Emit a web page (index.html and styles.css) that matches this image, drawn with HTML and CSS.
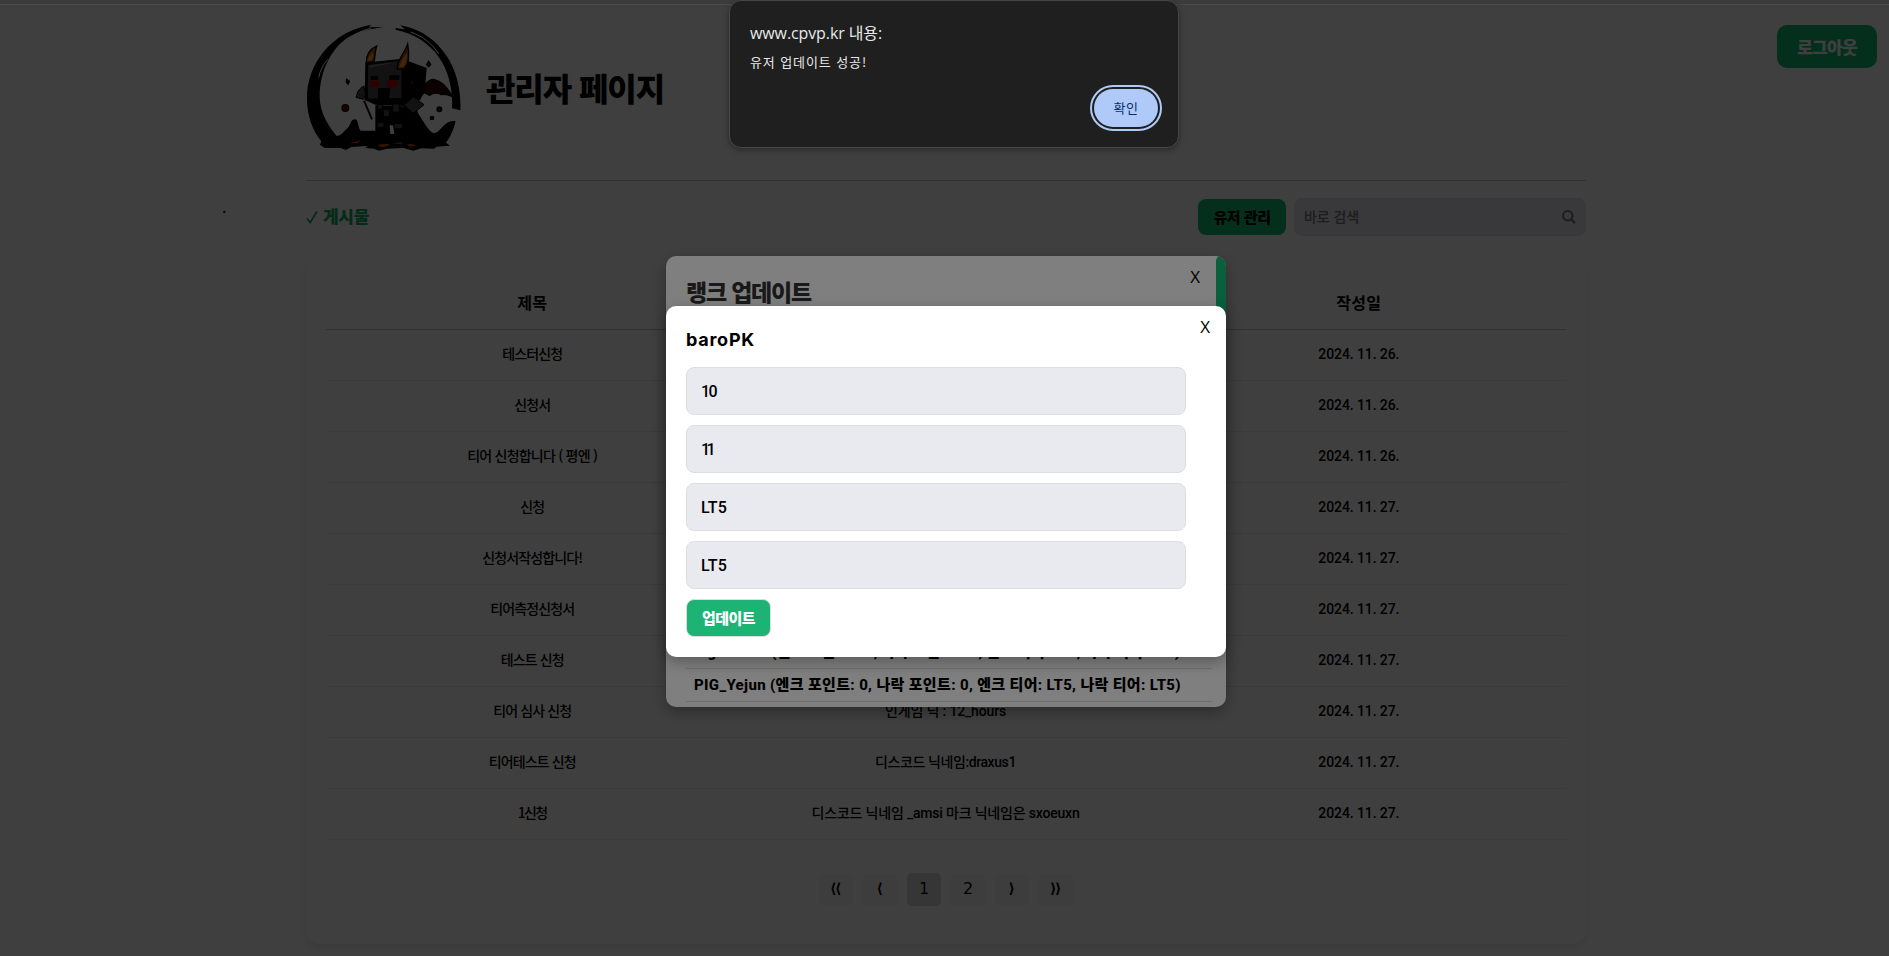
FILE: index.html
```html
<!DOCTYPE html>
<html lang="ko">
<head>
<meta charset="utf-8">
<title>관리자 페이지</title>
<link rel="stylesheet" href="styles.css">
</head>
<body>
<div class="topstrip"></div>
<span class="dot">.</span>
<button class="logout"><span data-w="60">로그아웃</span></button>
<main class="page">
  <header class="header">
    <svg class="logo" viewBox="48 60 468 402">
      <path d="M244 74C130 92 48 188 51 300C52 350 68 392 94 424L90 434L104 444L152 444L168 450L184 441L232 438L226 444L252 446L268 452L290 446L340 444L370 452L394 445L432 446L440 440L480 437L468 428C482 410 490 390 497 364C486 360 474 366 464 374C452 384 446 398 430 400C414 392 402 366 384 340L378 320L256 316L256 392L212 392C204 382 206 370 200 359C194 356 188 357 184 364C180 376 174 386 162 394C156 404 150 406 140 408C116 380 90 340 89 292C88 210 130 130 190 104C214 92 248 86 278 82C262 80 248 82 236 82Z"/>
      <path d="M330 76C430 91 518 186 511 331L486 325C492 215 440 115 316 89L318 84C328 86 336 86 345 88Z"/>
      <path class="gleam" d="M180 112c18-12 40-22 62-27M86 232c4-20 14-40 27-54M362 96c38 14 64 34 84 66"/>
      <path class="wing" d="M396 276C402 256 412 240 428 238C456 242 472 264 488 290C474 284 464 280 454 284C440 276 430 278 418 286C410 280 404 278 396 276Z"/>
      <path d="M226 188L336 176L410 204L404 276L390 300L344 318L256 314L224 300Z"/>
      <path class="face" d="M234 194L334 182L334 294L234 296Z"/>
      <path class="gray" d="M238 198L320 185L290 192L240 202Z"/>
      <path class="horn" d="M229 188C228 166 238 148 260 138C254 156 256 170 252 186ZM322 208C318 184 342 164 353 132C358 160 358 190 344 206Z"/>
      <path class="flame" d="M232 182C236 168 244 164 250 156C248 168 250 174 246 180ZM328 200C332 184 342 174 350 158C352 178 350 192 338 200Z"/>
      <path d="M242 228H264V240H242ZM298 226H328V240H298ZM264 264H300V276L296 296H264Z"/>
      <path class="eye" d="M241 242H267V262H241ZM292 240H322V262H292Z"/>
      <path class="plate" d="M342 316L370 290L402 314L370 340ZM262 314H278V326H262ZM280 328H298V350H280ZM308 312H328V336H308ZM262 368H282V382H262ZM312 370H338V386H312Z"/>
      <path class="plate" d="M198 292C202 276 208 264 222 258L226 284L220 298Z"/>
      <path class="spear" d="M222 302L246 358"/>
      <path class="gap" d="M299 376L309 376L313 402L301 402Z"/>
      <g class="spark"><circle cx="166" cy="324" r="10"/><circle cx="448" cy="328" r="7"/><circle cx="426" cy="354" r="5"/><path d="M416 184L422 194L416 200L410 194ZM170 238L178 244L174 252L169 247Z"/></g>
      <circle class="eye" cx="366" cy="248" r="4"/>
      <path class="lava" d="M180 430L212 421L204 430ZM262 436C276 430 288 430 302 434L286 440C278 442 270 440 262 436ZM306 430L340 427L332 432ZM350 434C360 430 370 432 380 436L364 441Z"/>
    </svg>
    <h1 class="title"><span data-w="178">관리자 페이지</span></h1>
  </header>
  <div class="toolbar">
    <div class="tab">
      <svg viewBox="0 0 12 14"><path d="M1 8.5l3.2 4L11 1.5"/></svg>
      <span data-w="46">게시물</span>
    </div>
    <div class="tools">
      <button class="manage"><span data-w="57">유저 관리</span></button>
      <div class="search">
        <span data-w="55">바로 검색</span>
        <svg viewBox="0 0 14 14"><circle cx="5.8" cy="5.8" r="4.7"/><path d="M9 9l4 4.2"/></svg>
      </div>
    </div>
  </div>
  <section class="card">
    <div class="row head"><span class="cell"><b data-w="30">제목</b></span><span class="cell"><b>내용</b></span><span class="cell"><b data-w="45">작성일</b></span></div>
    <div class="row"><span class="cell"><i data-w="60">테스터신청</i></span><span class="cell"></span><span class="cell"><i class="lat" data-w="81">2024. 11. 26.</i></span></div>
    <div class="row"><span class="cell"><i data-w="36">신청서</i></span><span class="cell"></span><span class="cell"><i class="lat" data-w="81">2024. 11. 26.</i></span></div>
    <div class="row"><span class="cell"><i data-w="130">티어 신청합니다 ( 평엔 )</i></span><span class="cell"></span><span class="cell"><i class="lat" data-w="81">2024. 11. 26.</i></span></div>
    <div class="row"><span class="cell"><i data-w="24">신청</i></span><span class="cell"></span><span class="cell"><i class="lat" data-w="81">2024. 11. 27.</i></span></div>
    <div class="row"><span class="cell"><i data-w="100">신청서작성합니다!</i></span><span class="cell"></span><span class="cell"><i class="lat" data-w="81">2024. 11. 27.</i></span></div>
    <div class="row"><span class="cell"><i data-w="84">티어측정신청서</i></span><span class="cell"></span><span class="cell"><i class="lat" data-w="81">2024. 11. 27.</i></span></div>
    <div class="row"><span class="cell"><i data-w="63">테스트 신청</i></span><span class="cell"></span><span class="cell"><i class="lat" data-w="81">2024. 11. 27.</i></span></div>
    <div class="row"><span class="cell"><i data-w="78">티어 심사 신청</i></span><span class="cell"><i class="lat" data-w="121">인게임 닉 : 12_hours</i></span><span class="cell"><i class="lat" data-w="81">2024. 11. 27.</i></span></div>
    <div class="row"><span class="cell"><i data-w="87">티어테스트 신청</i></span><span class="cell"><i class="lat" data-w="141">디스코드 닉네임:draxus1</i></span><span class="cell"><i class="lat" data-w="81">2024. 11. 27.</i></span></div>
    <div class="row"><span class="cell"><i data-w="29">1신청</i></span><span class="cell"><i class="lat" data-w="268">디스코드 닉네임 _amsi 마크 닉네임은 sxoeuxn</i></span><span class="cell"><i class="lat" data-w="81">2024. 11. 27.</i></span></div>
    <nav class="pager">
      <span class="pg arrow"><u>⟨</u><u>⟨</u></span><span class="pg arrow"><u>⟨</u></span><span class="pg on">1</span><span class="pg">2</span><span class="pg arrow"><u>⟩</u></span><span class="pg arrow"><u>⟩</u><u>⟩</u></span>
    </nav>
  </section>
</main>

<div class="overlay"></div>
<div class="modal list">
  <span class="close">X</span>
  <h2><span data-w="125">랭크 업데이트</span></h2>
  <div class="users">
    <div class="user"><span class="lat" data-w="486">Pignumber (엔크 포인트: 10, 나락 포인트: 10, 엔크 티어: LT5, 나락 티어: LT5)</span></div>
    <div class="user"><span class="lat" data-w="487">PIG_Yejun (엔크 포인트: 0, 나락 포인트: 0, 엔크 티어: LT5, 나락 티어: LT5)</span></div>
  </div>
  <div class="thumb"></div>
</div>
<div class="overlay"></div>
<div class="modal edit">
  <span class="close">X</span>
  <h3><span data-w="69">baroPK</span></h3>
  <div class="field"><span data-w="15">10</span></div>
  <div class="field"><span data-w="11">11</span></div>
  <div class="field"><span data-w="26">LT5</span></div>
  <div class="field"><span data-w="26">LT5</span></div>
  <button class="update"><span data-w="53">업데이트</span></button>
</div>
<div class="alert">
  <div class="site"><span data-w="132">www.cpvp.kr 내용:</span></div>
  <div class="msg"><span data-w="117">유저 업데이트 성공!</span></div>
  <button class="ok"><span data-w="25">확인</span></button>
</div>
<script src="fit.js"></script>
</body>
</html>
```
FILE: styles.css
```css
* { box-sizing: border-box; }
html, body { margin: 0; height: 956px; overflow: hidden; }
body {
  position: relative;
  background: #fff;
  color: #000;
  font-family: "Noto Sans CJK KR", sans-serif;
}
button { font: inherit; border: 0; padding: 0; }
span, b, i { white-space: nowrap; font-style: normal; }
.lat { font-family: "Roboto", "Noto Sans CJK KR", sans-serif; }

.topstrip {
  position: absolute; left: 0; right: 0; top: 0; z-index: 2;
  height: 5px; background: #3c3c3c; border-bottom: 1px solid #4a4a4a;
}
.dot { position: absolute; left: 222px; top: 195px; font-size: 16px; line-height: 22px; }
.logout {
  position: absolute; left: 1777px; top: 25px;
  width: 100px; height: 43px; border-radius: 10px;
  background: #12bf77; color: #fff; font-size: 17px; font-weight: 900; line-height: 38px;
}

.page { width: 1280px; margin-left: 306px; }
.header {
  display: flex; align-items: flex-start;
  height: 181px; padding-top: 20px;
  border-bottom: 1px solid #c4c4c4;
}
.logo { width: 156px; height: 134px; }
.title { margin: 43px 0 0 24px; font-size: 32px; line-height: 48px; font-weight: 900; }
.gleam { fill: none; stroke: #fff; stroke-width: 3; }
.wing { fill: #300; stroke: #000; stroke-width: 4; }
.face { fill: #484848; }
.gray { fill: #999; }
.horn { fill: #b45010; stroke: #000; stroke-width: 4; }
.flame { fill: #ff9a30; }
.eye { fill: #b00; }
.plate { fill: #484848; stroke: #000; stroke-width: 3; }
.spear { fill: none; stroke: #300; stroke-width: 6; }
.gap { fill: #fff; }
.spark { fill: #700; stroke: #000; stroke-width: 4; }
.lava { fill: #d04a00; }

.toolbar {
  display: flex; justify-content: space-between; align-items: center;
  height: 38px; margin-top: 17px;
}
.tab {
  display: flex; align-items: center; gap: 5px;
  color: #12a86a; font-size: 17px; font-weight: 900; line-height: 32px;
}
.tab span { padding-bottom: 2px; }
.tab svg { width: 12px; height: 14px; fill: none; stroke: #12a86a; stroke-width: 1.7; }
.tools { display: flex; align-items: center; gap: 8px; }
.manage {
  width: 88px; height: 36px; border-radius: 8px;
  background: #12bf77; color: #000; font-size: 15px; font-weight: 900; line-height: 32px;
}
.search {
  display: flex; align-items: center; justify-content: space-between;
  width: 292px; height: 38px; padding: 0 9px;
  background: #e5e5ee; border: 1px solid #dcdce4; border-radius: 8px;
  color: #757575; font-size: 14px; font-weight: 500;
}
.search span { padding-bottom: 2px; }
.search svg { width: 14px; height: 14px; fill: none; stroke: #757575; stroke-width: 2; }

.card {
  height: 686px; margin-top: 22px; padding: 20px 20px 0;
  border-radius: 14px; box-shadow: 0 4px 10px rgba(0, 0, 0, .1);
}
.row {
  display: grid; grid-template-columns: repeat(3, 1fr); align-items: center;
  height: 51px; border-bottom: 1px solid #e9e9e9;
  font-size: 14px; font-weight: 500; text-align: center;
}
.row .cell { line-height: 20px; padding: 0 1px 4px 0; }
.row.head { height: 52px; border-bottom: 1px solid #c6c6c6; font-size: 16px; }
.row.head b { font-weight: 700; }
.pager { display: flex; justify-content: center; gap: 10px; margin-top: 33px; }
.pg {
  width: 34px; height: 33px; border-radius: 5px; background: #f4f4f4;
  font: 500 16px/31px "DejaVu Sans", sans-serif; text-align: center;
}
.pg.on { background: #d8d8d8; }
.pg u { display: inline-block; width: 5px; text-decoration: none; text-indent: -1px; }
.pg.arrow { font-size: 14px; font-weight: 700; line-height: 30px; }

.overlay { position: absolute; inset: 0; background: rgba(0, 0, 0, .5); }
.modal {
  position: absolute; left: 666px; width: 560px;
  background: #fff; border-radius: 10px; overflow: hidden;
  padding: 20px; box-shadow: 0 5px 15px rgba(0, 0, 0, .3);
}
.close {
  position: absolute; top: 9px; right: 16px;
  font: 400 17px/24px "Open Sans", sans-serif;
}
.modal.list { top: 256px; height: 451px; }
.modal.list .close { right: 26px; }
.modal h2 { margin: -1px 0 0; font-size: 23px; line-height: 32px; font-weight: 900; color: #333; }
.users { width: 526px; margin-top: 329px; }
.user {
  height: 33px; padding-left: 8px; border-bottom: 1px solid #ddd;
  font-size: 15px; font-weight: 900; line-height: 30px;
}
.user .lat { font-weight: 800; }
.thumb {
  position: absolute; top: 0; right: 0; width: 10px; height: 80px;
  border-radius: 5px; background: #14bf78;
}
.modal.edit { top: 306px; height: 351px; }
.modal h3 { margin: 0 0 13px; font: 700 18px/28px Inter, sans-serif; }
.field {
  width: 500px; height: 48px; margin-bottom: 10px; padding-left: 14px;
  background: #e9eaef; border: 1px solid #ddd; border-radius: 8px;
  font: 500 16px/47px Roboto, sans-serif;
}
.update {
  display: block; width: 85px; height: 38px;
  background: #1cb374; border: 1px solid #ddd; border-radius: 8px;
  color: #fff; font-size: 15px; font-weight: 900; line-height: 32px;
}

.alert {
  position: absolute; left: 729px; top: 0; z-index: 3;
  width: 450px; height: 148px; padding: 19px 20px;
  background: #1f1f1f; border: 1px solid #474747; border-radius: 12px;
  box-shadow: 0 2px 6px rgba(0, 0, 0, .35);
  color: #e8e8e8;
}
.site { font: 400 16px/26px "Open Sans", "Noto Sans CJK KR", sans-serif; }
.msg { margin-top: 4px; font-size: 13px; line-height: 24px; }
.ok {
  position: absolute; right: 20px; top: 88px;
  width: 64px; height: 38px; border-radius: 19px;
  background: #afcaf8; color: #062e6f; font-size: 13px; line-height: 36px;
  outline: 2px solid #afcaf8; outline-offset: 2px;
}
```
FILE: fit.js
```js
// Tracks each label so that it takes the width given in data-w.
document.querySelectorAll('[data-w]').forEach(function (el) {
  var natural = el.getBoundingClientRect().width;
  var step = (Number(el.dataset.w) - natural) / el.textContent.length;
  el.style.letterSpacing = step.toFixed(3) + 'px';
});
```
